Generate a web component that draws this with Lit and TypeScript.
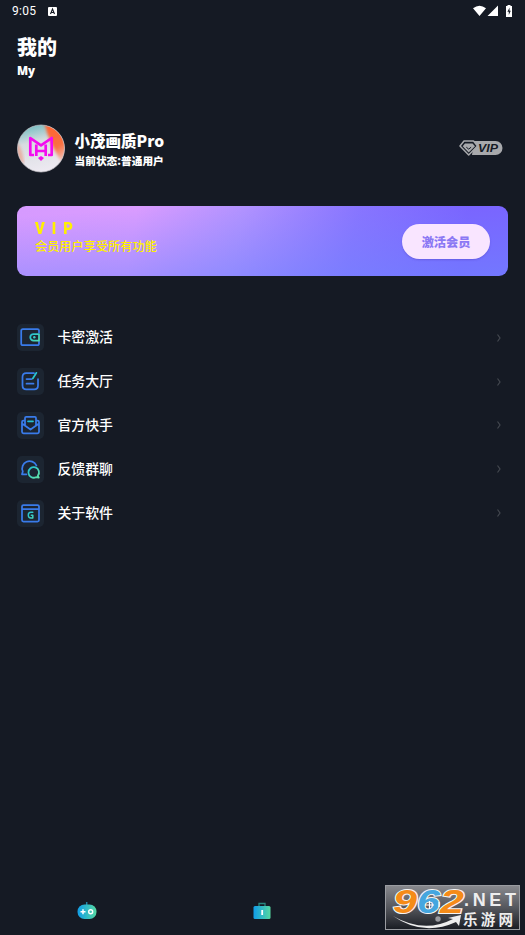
import { LitElement, html, svg, css } from "lit";
import { customElement } from "lit/decorators.js";

const glyphs = {
  wallet: svg`<path d="M22 8.500V6.600Q22 5 20.400 5H5.900Q4.200 5 4.200 6.800v12.600q0 1.800 1.700 1.800h14.300q1.800 0 1.800-1.800V17.500" fill="none" stroke="#397bea"/><path d="M22 10h-5.500a3 3 0 0 0 0 6.500H22Z" fill="none" stroke="url(#g)"/><circle cx="17.300" cy="13.200" r="1.200" fill="#35cfc6"/>`,
  task: svg`<path d="M17 5.200H9.200Q5.500 5.200 5.500 9v8.600q0 3.800 3.700 3.800h8q3.800 0 3.800-3.800V11M9.500 11h5M9.500 15.700h7" fill="none" stroke="#397bea"/><path d="m15.800 10.500 3.600-5.700" fill="none" stroke="url(#g)"/>`,
  mail: svg`<path d="M8 8.500H6.400Q5 8.500 5 10v9.800Q5 21.300 6.500 21.300h14q1.500 0 1.500-1.500V10Q22 8.500 20.600 8.500H19M5.300 11.800l8.200 5.700 8.200-5.700M8 13.200V6q0-1.200 1.200-1.200h8.600Q19 4.800 19 6v7.200" fill="none" stroke="#397bea"/><path d="M11 9.300h5" fill="none" stroke="url(#g)"/>`,
  chat: svg`<path d="M9.500 18.300H5l.8-2.800A7.200 7.200 0 1 1 19.400 9.500" fill="none" stroke="#397bea"/><path d="M20.800 19.800a5.300 5.300 0 1 0-1.800 1.400l2.800.5Z" fill="none" stroke="url(#g)"/>`,
  about: svg`<path d="M6.500 5h14Q22 5 22 6.500v13.500q0 1.500-1.500 1.500h-14Q5 21.500 5 20V6.500Q5 5 6.500 5ZM5 9.200h17" fill="none" stroke="#397bea"/><path d="M15.800 12.300h-2q-2.500 0-2.500 2.800t2.500 2.800h2v-2.600h-1.500" fill="none" stroke="url(#g)" stroke-width="1.500"/>`,
};

const entries: [keyof typeof glyphs, string][] = [
  ["wallet", "卡密激活"],
  ["task", "任务大厅"],
  ["mail", "官方快手"],
  ["chat", "反馈群聊"],
  ["about", "关于软件"],
];

@customElement("menu-glyph")
class MenuGlyph extends LitElement {
  static properties = { name: {} };
  declare name: keyof typeof glyphs;
  static styles = css`
    :host { display: block; width: 27px; height: 27px; border-radius: 5px; background: #1c2531; }
    svg { display: block; stroke-width: 1.750; stroke-linecap: round; stroke-linejoin: round; }
  `;
  render() {
    return html`<svg width="27" height="27" viewBox="0 0 27 27">
      <defs><linearGradient id="g" gradientUnits="userSpaceOnUse" x1="11" y1="8" x2="23" y2="20"><stop stop-color="#15b8dc"/><stop offset="1" stop-color="#60e3a8"/></linearGradient></defs>
      ${glyphs[this.name]}
    </svg>`;
  }
}

@customElement("app-root")
class AppRoot extends LitElement {
  static styles = css`
    :host {
      display: flex; flex-direction: column; box-sizing: border-box; position: relative;
      width: 100%; height: 935px; overflow: hidden; background: #151a24; color: #fff;
      font-family: "Noto Sans CJK SC", sans-serif;
    }
    svg { display: block; flex: none; }
    .status { display: flex; align-items: center; height: 22px; padding: 0 11px 0 12px; font: 12px/22px Roboto, sans-serif; }
    .clock { width: 36px; letter-spacing: .3px; }
    .system { margin-left: auto; }
    header { padding: 14px 17px 0; }
    h1 { margin: 0; font-size: 20px; line-height: 22px; font-weight: 900; }
    .sub { margin-top: 5px; font: 900 11.500px/16px "Noto Sans", "Noto Sans CJK SC", sans-serif; }
    .profile { display: flex; align-items: center; height: 50px; margin: 44px 22px 0 17px; }
    .who { margin-left: 8.500px; white-space: nowrap; }
    .name { font-size: 15.500px; line-height: 20px; font-weight: 900; margin-top: 4px; }
    .state { font-size: 10.700px; line-height: 18px; font-weight: 900; margin-top: 2px; }
    .badge { margin-left: auto; }
    .card {
      display: flex; justify-content: space-between; box-sizing: border-box; height: 70px; margin: 33px 17px 0; padding: 13px 18px 0;
      border-radius: 9px; color: #fff000;
      background: linear-gradient(176deg, rgba(110,132,255,0) 10%, rgba(110,132,255,.72) 108%), linear-gradient(100deg, #d69aff 0%, #da9cff 24%, #b593ff 45%, #8b73ff 68%, #7c5fff 90%);
    }
    .vip { font: 900 17px/19px Roboto, sans-serif; letter-spacing: 8px; transform: scaleX(.87); transform-origin: 0 50%; }
    .perk { font-size: 12.200px; line-height: 18px; font-weight: 500; margin-top: -1.500px; }
    .activate {
      display: flex; align-items: center; justify-content: center; width: 88px; height: 35px; margin-top: 5px;
      border-radius: 18px; background: #f9e5ff; color: #8b78f4; font-size: 12.200px; font-weight: 900; box-shadow: 0 1px 2px #4d3dbb66;
    }
    .menu { display: grid; grid-auto-rows: 43.800px; margin: 40px 21px 0 17px; }
    .row { display: flex; align-items: center; font-size: 13.900px; font-weight: 500; }
    .label { flex: 1; margin-left: 13.400px; line-height: 20px; margin-top: -3px; }
    nav { display: grid; grid-template-columns: repeat(3, 1fr); justify-items: center; align-items: center; height: 48px; margin: auto 1px 0 -1px; }
    .mark { position: absolute; left: 385px; top: 885px; overflow: visible; }
  `;

  render() {
    return html`
      <div class="status">
        <span class="clock">9:05</span>
        <svg width="9" height="9" viewBox="0 0 9 9"><rect width="9" height="9" rx="1" fill="#fff"/><path d="m2.500 7 2-5 2 5M3.300 5.500h2.500" fill="none" stroke="#151a24" stroke-width="1.100"/></svg>
        <svg class="system" width="41" height="14" viewBox="0 0 41 14" fill="#fff">
          <path d="M0 4.300Q6.500-1 13 4.300L6.500 12ZM14.500 12 25 1.500V12Z"/><path d="M33 2h1.500V1h3v1H39v11h-6Z"/><path d="m36.600 3.500-2.200 4.300h1.400v3.300l2-4.300h-1.300Z" fill="#151a24"/>
        </svg>
      </div>
      <header><h1>我的</h1><div class="sub">My</div></header>
      <section class="profile">
        <svg width="49" height="49" viewBox="0 0 49 49">
          <defs>
            <linearGradient id="sky" x1=".2" y1="0" x2=".45" y2="1"><stop stop-color="#68b9bd"/><stop offset=".38" stop-color="#d7dce0"/><stop offset="1" stop-color="#eeeaf2"/></linearGradient>
            <linearGradient id="sun" x1=".35" y1="0" x2=".8" y2="1"><stop stop-color="#ff6430"/><stop offset=".55" stop-color="#fb7040"/><stop offset="1" stop-color="#eee1e4"/></linearGradient>
            <clipPath id="round"><circle cx="24" cy="24.500" r="23.500"/></clipPath>
            <filter id="soft"><feGaussianBlur stdDeviation="1.600"/></filter>
          </defs>
          <g clip-path="url(#round)"><path d="M0 0h49v49H0Z" fill="url(#sky)"/><path d="M27-2q5 22 19 42h8V-2Z" fill="url(#sun)" filter="url(#soft)"/><path d="M-2 17q8 6 9 23l-9-3Z" fill="#ee8b70" opacity=".55" filter="url(#soft)"/></g>
          <circle cx="24" cy="24.500" r="23.500" fill="none" stroke="#c8c5cb" stroke-width=".7"/>
          <g fill="none" stroke="#f30bef" stroke-width="2.700" stroke-linejoin="round"><path d="M17 31h-3.700V14L24 21.300 34.700 14v17H31"/><path d="M19.300 20.500v11.500M28.700 20.500v11.500M19.300 27h9.400"/></g><path d="m21 34 3-2 3 2-3 3Z" fill="#f30bef"/>
        </svg>
        <div class="who"><div class="name">小茂画质Pro</div><div class="state">当前状态:普通用户</div></div>
        <svg class="badge" width="44" height="16" viewBox="0 0 44 16">
          <path d="M15 1h21.500a7 7 0 0 1 0 14H13Z" fill="#a8a9ac"/>
          <path d="M5 1h9.500L18.500 6 9.700 15 1 6Z" fill="#151a24" stroke="#a8a9ac" stroke-width="1.500" stroke-linejoin="round"/>
          <path d="M6 3.500h7.500L16 6.200 9.700 12.500 3.700 6.200Z" fill="#a8a9ac"/><path d="m7.300 7.200 2.400 1.900 2.400-1.900" fill="none" stroke="#151a24" stroke-width="1"/>
          <text x="19" y="12.200" textLength="20" lengthAdjust="spacingAndGlyphs" font-family="Liberation Sans, sans-serif" font-size="11.500" font-weight="700" font-style="italic" fill="#151a24">VIP</text>
        </svg>
      </section>
      <section class="card">
        <div><div class="vip">VIP</div><div class="perk">会员用户享受所有功能</div></div>
        <div class="activate">激活会员</div>
      </section>
      <section class="menu">
        ${entries.map(([name, label]) => html`<div class="row"><menu-glyph .name=${name}></menu-glyph><span class="label">${label}</span>
          <svg width="10" height="10" viewBox="0 0 10 10"><path d="m3.500 1.500 2.500 3.500-2.500 3.500" fill="none" stroke="#43474f" stroke-width="1.200"/></svg></div>`)}
      </section>
      <nav>
        <svg width="20" height="20" viewBox="0 0 20 20"><defs><linearGradient id="n"><stop stop-color="#109de8"/><stop offset="1" stop-color="#55d9a1"/></linearGradient></defs>
          <path d="M9.700 4V1" stroke="#2586a6" stroke-width="1.500"/><rect x=".5" y="3.500" width="19" height="14.500" rx="7" fill="url(#n)"/><path d="M3.500 10.700h5M6 8.200v5" stroke="#fff" stroke-width="1.500"/><circle cx="13.700" cy="10.700" r="2" fill="none" stroke="#fff" stroke-width="1.400"/></svg>
        <svg width="18" height="18" viewBox="0 0 18 18"><defs><linearGradient id="n2"><stop stop-color="#109de8"/><stop offset="1" stop-color="#55d9a1"/></linearGradient></defs><path d="M6 5V1.500h6V5" fill="none" stroke="#28877f" stroke-width="1.300"/><rect x=".5" y="4" width="17" height="13" rx="1.500" fill="url(#n2)"/><path d="M9.200 8v5" stroke="#fff" stroke-width="1.800"/></svg>
      </nav>
      <svg class="mark" width="135" height="45" viewBox="0 0 135 45">
        <defs><linearGradient id="plate" x2="0" y2="1"><stop stop-color="#898a8f"/><stop offset=".5" stop-color="#55575d"/><stop offset="1" stop-color="#191c23"/></linearGradient></defs>
        <rect x=".5" y=".5" width="134" height="44" fill="url(#plate)" stroke="#9a9ca1"/>
        <path d="M8 31q31 18 60 3l-5-1 13-3-2 11-3-4Q38 52 8 31Z" fill="#eee"/><circle cx="53" cy="34" r="2.700" fill="#999ba0"/>
        <g font-family="Liberation Sans, sans-serif" font-size="34" font-weight="700" font-style="italic" stroke="#f4f4f4" stroke-width="2" paint-order="stroke">
          <text x="8" y="28" textLength="24" lengthAdjust="spacingAndGlyphs" fill="#f58b18">9</text><text x="32" y="28" textLength="23" lengthAdjust="spacingAndGlyphs" fill="#45a6df">6</text><text x="55" y="28" textLength="24" lengthAdjust="spacingAndGlyphs" fill="#f58b18">2</text>
        </g>
        <path d="M40 20h9M44.500 16v8M54 17v5" stroke="#fff" stroke-width="1.200"/>
        <text x="79" y="21" textLength="52" font-family="Liberation Sans, sans-serif" font-size="18" font-weight="700" fill="#eee">.NET</text>
        <text x="78" y="39.500" textLength="50" font-family="Noto Sans CJK SC, sans-serif" font-size="14.500" font-weight="700" fill="#eee">乐游网</text>
      </svg>`;
  }
}
